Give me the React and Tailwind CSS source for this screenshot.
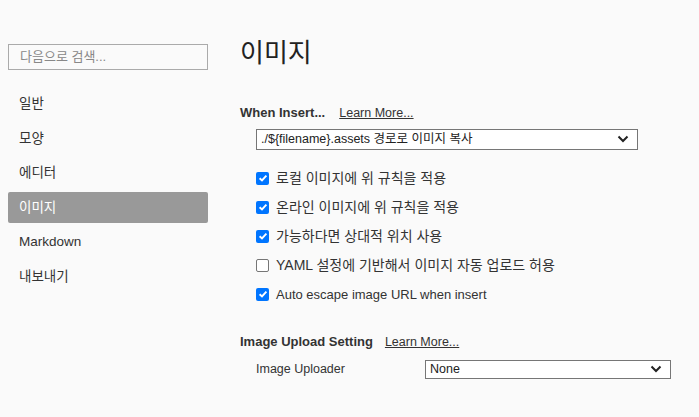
const font = { fontFamily: '"Liberation Sans", "Noto Sans CJK KR", sans-serif' };

const menu = ["일반", "모양", "에디터", "이미지", "Markdown", "내보내기"];

const rules = [
  { label: "로컬 이미지에 위 규칙을 적용", checked: true, size: "text-[14px]" },
  { label: "온라인 이미지에 위 규칙을 적용", checked: true, size: "text-[14px]" },
  { label: "가능하다면 상대적 위치 사용", checked: true, size: "text-[14px]" },
  { label: "YAML 설정에 기반해서 이미지 자동 업로드 허용", checked: false, size: "text-[14px]" },
  { label: "Auto escape image URL when insert", checked: true, size: "text-[13px]" },
];

function Chevron() {
  return (
    <svg width="12" height="8" viewBox="0 0 12 8" className="shrink-0">
      <path d="M1.5 1.5 L6 6 L10.5 1.5" fill="none" stroke="#222" strokeWidth="2" />
    </svg>
  );
}

function Select({ value, className }) {
  return (
    <div className={`flex items-center justify-between bg-white border border-[#767676] pl-[4px] pr-[8px] text-[12.5px] text-[#222] ${className}`}>
      <span>{value}</span>
      <Chevron />
    </div>
  );
}

function Checkbox({ checked }) {
  return checked ? (
    <div className="w-[13px] h-[13px] rounded-[2px] bg-[#0075ff] flex items-center justify-center">
      <svg width="10" height="10" viewBox="0 0 10 10">
        <path d="M1.6 5.2 L4 7.5 L8.4 2.6" fill="none" stroke="white" strokeWidth="1.9" />
      </svg>
    </div>
  ) : (
    <div className="w-[13px] h-[13px] rounded-[2px] border border-[#767676] bg-white" />
  );
}

export default function App() {
  return (
    <div style={font} className="w-[699px] h-[417px] bg-[#fafafa] text-[#333] flex overflow-hidden">
      <div className="w-[216px] shrink-0 pl-[8px] pt-[44px]">
        <div className="w-[200px] h-[26px] border border-[#aaa] bg-[#fafafa] pl-[11px] flex items-center text-[13px] text-[#888]">
          다음으로 검색...
        </div>
        <div className="mt-[17px] flex flex-col w-[200px]">
          {menu.map((m) =>
            m === "이미지" ? (
              <div key={m} className="h-[31px] my-[1.75px] flex items-center pl-[11px] text-[13.5px] rounded-[2px] bg-[#999] text-white">
                {m}
              </div>
            ) : (
              <div key={m} className="h-[34.5px] flex items-center pl-[11px] text-[13.5px] text-[#333]">
                {m}
              </div>
            )
          )}
        </div>
      </div>

      <div className="flex-1 pl-[24px] pt-[36px]">
        <h1 className="text-[26px] leading-[34px] font-normal text-[#222]">이미지</h1>

        <div className="mt-[33px] flex items-baseline gap-[14px]">
          <span className="text-[13px] font-bold text-[#333]">When Insert...</span>
          <span className="text-[12.5px] underline text-[#333]">Learn More...</span>
        </div>

        <Select value="./${filename}.assets 경로로 이미지 복사" className="ml-[16px] mt-[6px] w-[382px] h-[21px]" />

        <div className="mt-[14px] ml-[16px] flex flex-col">
          {rules.map((r) => (
            <div key={r.label} className={`h-[29px] flex items-center gap-[7px] text-[#333] ${r.size}`}>
              <Checkbox checked={r.checked} />
              <span>{r.label}</span>
            </div>
          ))}
        </div>

        <div className="mt-[23px] flex items-baseline gap-[12px]">
          <span className="text-[13px] font-bold text-[#333]">Image Upload Setting</span>
          <span className="text-[12.5px] underline text-[#333]">Learn More...</span>
        </div>

        <div className="mt-[8px] ml-[16px] flex items-center">
          <span className="w-[169px] text-[12.5px] text-[#333]">Image Uploader</span>
          <Select value="None" className="w-[246px] h-[19px]" />
        </div>
      </div>
    </div>
  );
}
